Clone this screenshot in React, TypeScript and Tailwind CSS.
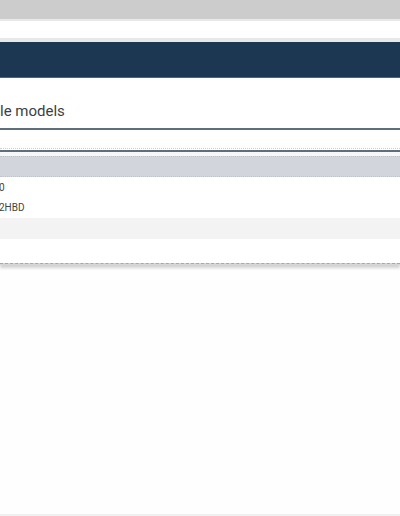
import React from "react";

const rows = [
  { name: "0", shade: false, h: "h-[20px]" },
  { name: "2HBD", shade: false, h: "h-[21px]" },
  { name: "", shade: true, h: "h-[21px]" },
  { name: "", shade: false, h: "h-[24px]" },
];

const App: React.FC = () => {
  return (
    <div
      className="w-[400px] h-[516px] overflow-hidden bg-[#fefefe] flex flex-col text-[#333]"
      style={{ fontFamily: "Roboto, 'Noto Sans', sans-serif" }}
    >
      {/* top bar */}
      <div className="h-[19px] bg-[#cccccc] shrink-0"></div>
      <div className="h-[23px] bg-white border-t-2 border-b-4 border-[#e8e8e8] shrink-0"></div>

      {/* modal */}
      <section className="flex flex-col bg-white shadow-[0_3px_3px_rgba(0,0,0,0.18)]">
        <div className="h-[36px] bg-[#1b3752] border-b border-[#4d6580]"></div>
        <h2 className="h-[50px] flex items-end pb-[9px] text-[15px] leading-none text-[#3a3f45]">
          le models
        </h2>
        <div className="h-[2px] bg-[#5f6e7d]"></div>
        <div className="h-[19px] border-b border-dotted border-[#d0d0d0]"></div>
        <div className="h-[2px] bg-[#5f6e7d] mt-[1px]"></div>
        <div className="h-[4px] bg-[#f7f7f7]"></div>

        {/* table */}
        <div className="flex flex-col text-[10px] text-[#444]">
          <div className="h-[21px] bg-[#d2d6dc] border-y border-dotted border-[#bfc4ca]"></div>
          {rows.map((r, i) => (
            <div
              key={i}
              className={`flex items-center ${r.h} ${r.shade ? "bg-[#f3f3f3]" : "bg-white"}`}
            >
              <span className="-ml-[1px]">{r.name}</span>
            </div>
          ))}
        </div>
        <div className="h-[2px] border-t border-dashed border-[#a8a8a8] bg-[#d6d6d6]"></div>
      </section>

      <div className="flex-1"></div>
      <div className="h-[2px] bg-[#f0f0f0] shrink-0"></div>
    </div>
  );
};

export default App;
